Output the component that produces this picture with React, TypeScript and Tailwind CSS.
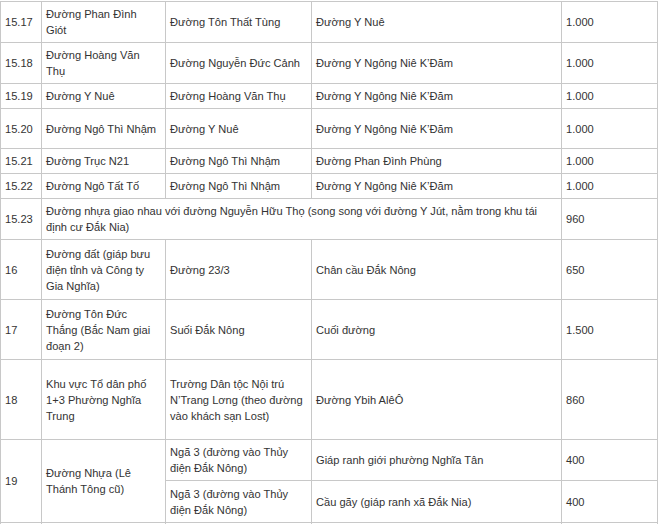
import React from "react";

type Row = { cells: { text: string; colSpan?: number; rowSpan?: number }[]; h: string };

// "\n" marks where the original cell wraps
const rows: Row[] = [
  { h: "h-[41px]", cells: [{ text: "15.17" }, { text: "Đường Phan Đình\nGiót" }, { text: "Đường Tôn Thất Tùng" }, { text: "Đường Y Nuê" }, { text: "1.000" }] },
  { h: "h-[41px]", cells: [{ text: "15.18" }, { text: "Đường Hoàng Văn\nThụ" }, { text: "Đường Nguyễn Đức Cảnh" }, { text: "Đường Y Ngông Niê K’Đăm" }, { text: "1.000" }] },
  { h: "h-[25px]", cells: [{ text: "15.19" }, { text: "Đường Y Nuê" }, { text: "Đường Hoàng Văn Thụ" }, { text: "Đường Y Ngông Niê K’Đăm" }, { text: "1.000" }] },
  { h: "h-[40px]", cells: [{ text: "15.20" }, { text: "Đường Ngô Thì Nhậm" }, { text: "Đường Y Nuê" }, { text: "Đường Y Ngông Niê K’Đăm" }, { text: "1.000" }] },
  { h: "h-[25px]", cells: [{ text: "15.21" }, { text: "Đường Trục N21" }, { text: "Đường Ngô Thì Nhậm" }, { text: "Đường Phan Đình Phùng" }, { text: "1.000" }] },
  { h: "h-[25px]", cells: [{ text: "15.22" }, { text: "Đường Ngô Tất Tố" }, { text: "Đường Ngô Thì Nhậm" }, { text: "Đường Y Ngông Niê K’Đăm" }, { text: "1.000" }] },
  {
    h: "h-[41px]",
    cells: [
      { text: "15.23" },
      { text: "Đường nhựa giao nhau với đường Nguyễn Hữu Thọ (song song với đường Y Jút, nằm trong khu tái\nđịnh cư Đắk Nia)", colSpan: 3 },
      { text: "960" },
    ],
  },
  { h: "h-[60px]", cells: [{ text: "16" }, { text: "Đường đất (giáp bưu\nđiện tỉnh và Công ty\nGia Nghĩa)" }, { text: "Đường 23/3" }, { text: "Chân cầu Đắk Nông" }, { text: "650" }] },
  { h: "h-[60px]", cells: [{ text: "17" }, { text: "Đường Tôn Đức\nThắng (Bắc Nam giai\nđoạn 2)" }, { text: "Suối Đắk Nông" }, { text: "Cuối đường" }, { text: "1.500" }] },
  {
    h: "h-[80px]",
    cells: [
      { text: "18" },
      { text: "Khu vực Tổ dân phố\n1+3 Phường Nghĩa\nTrung" },
      { text: "Trường Dân tộc Nội trú\nN’Trang Lơng (theo đường\nvào khách sạn Lost)" },
      { text: "Đường Ybih AlêÔ" },
      { text: "860" },
    ],
  },
  {
    h: "h-[41px]",
    cells: [
      { text: "19", rowSpan: 2 },
      { text: "Đường Nhựa (Lê\nThánh Tông cũ)", rowSpan: 2 },
      { text: "Ngã 3 (đường vào Thủy\nđiện Đắk Nông)" },
      { text: "Giáp ranh giới phường Nghĩa Tân" },
      { text: "400" },
    ],
  },
  { h: "h-[42px]", cells: [{ text: "Ngã 3 (đường vào Thủy\nđiện Đắk Nông)" }, { text: "Cầu gãy (giáp ranh xã Đắk Nia)" }, { text: "400" }] },
  { h: "h-[41px]", cells: [{ text: "" }, { text: "" }, { text: "" }, { text: "" }, { text: "" }] },
];

export default function App() {
  return (
    <div className="bg-white w-[661px] h-[524px] overflow-hidden">
      <table
        className="table-fixed border-collapse w-[657px] mt-px text-[11.1px] leading-4 text-[#333]"
        style={{ fontFamily: '"Liberation Sans", Arial, sans-serif' }}
      >
        <colgroup>
          <col className="w-[41px]" />
          <col className="w-[124px]" />
          <col className="w-[146px]" />
          <col className="w-[250px]" />
          <col className="w-[96px]" />
        </colgroup>
        <tbody>
          {rows.map((r, i) => (
            <tr key={i} className={r.h}>
              {r.cells.map((c, j) => (
                <td
                  key={j}
                  colSpan={c.colSpan}
                  rowSpan={c.rowSpan}
                  className="border border-[#c8c8c8] px-[4px] py-0 align-middle whitespace-pre-line"
                >
                  {c.text}
                </td>
              ))}
            </tr>
          ))}
        </tbody>
      </table>
    </div>
  );
}
